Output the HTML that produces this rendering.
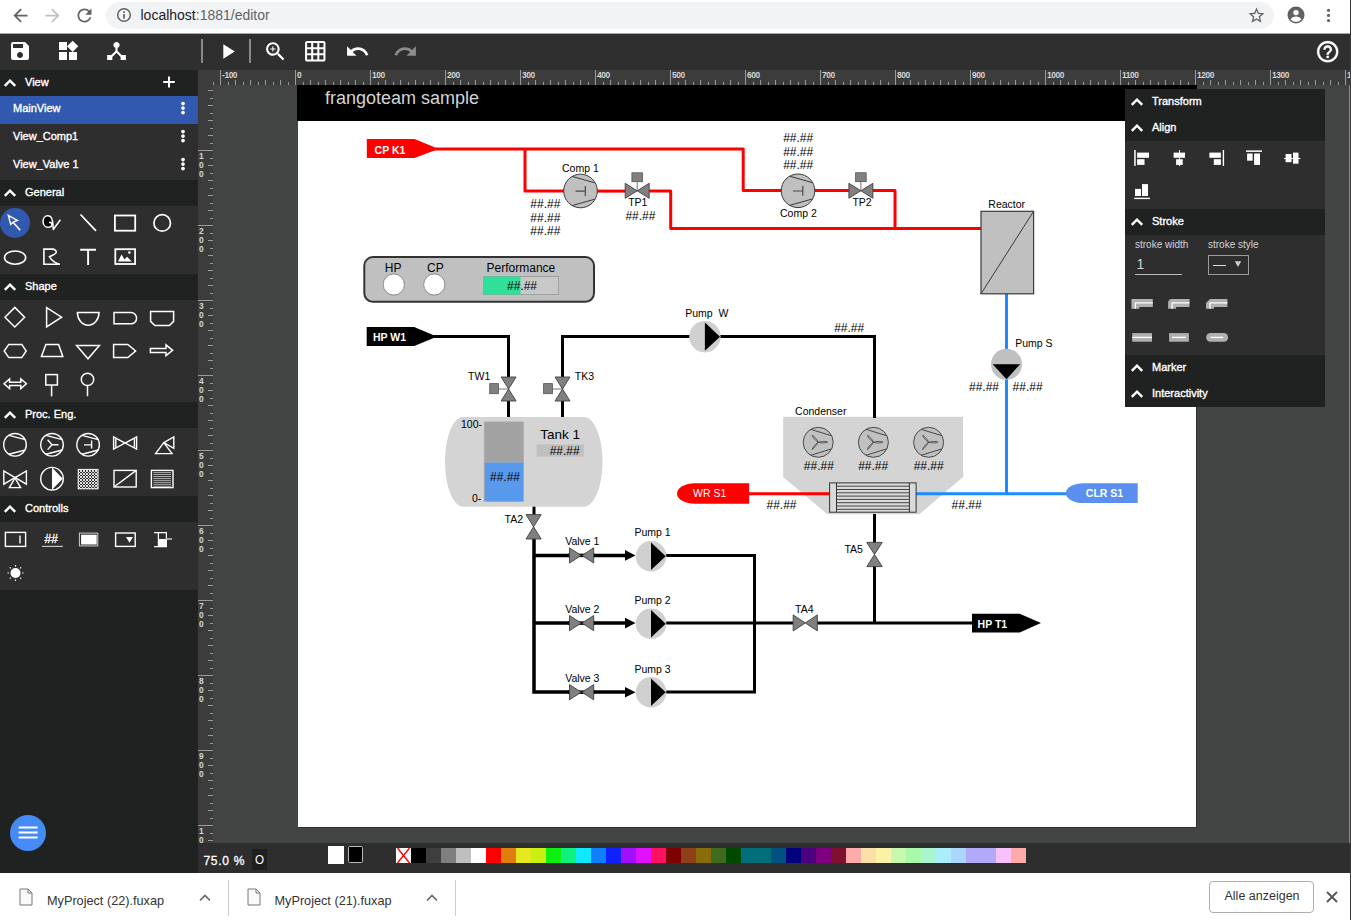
<!DOCTYPE html>
<html><head><meta charset="utf-8"><style>
html,body{margin:0;padding:0;width:1351px;height:920px;overflow:hidden;background:#fff;font-family:"Liberation Sans",sans-serif;}
.a{position:absolute;}
.t{position:absolute;white-space:nowrap;line-height:1;}
.ui{-webkit-text-stroke:0.35px #fff;}
</style></head><body>

<div class="a" style="left:0;top:0;width:1351px;height:33px;background:#fff"></div>
<div class="a" style="left:0;top:33px;width:1351px;height:1px;background:#a9a9a9"></div>
<div class="a" style="left:106px;top:1.5px;width:1168px;height:27.5px;border-radius:14px;background:#f1f3f4"></div>
<svg class="a" style="left:9.5px;top:4.5px" width="21" height="21" viewBox="0 0 24 24"><path fill="#5f6368" d="M20 11H7.83l5.59-5.59L12 4l-8 8 8 8 1.41-1.41L7.83 13H20v-2z"/></svg>
<svg class="a" style="left:41.5px;top:4.5px" width="21" height="21" viewBox="0 0 24 24"><path fill="#bdc1c6" d="M12 4l-1.41 1.41L16.17 11H4v2h12.17l-5.58 5.59L12 20l8-8z"/></svg>
<svg class="a" style="left:73.5px;top:4.5px" width="21" height="21" viewBox="0 0 24 24"><path fill="#5f6368" d="M17.65 6.35C16.2 4.9 14.21 4 12 4c-4.42 0-7.99 3.58-7.99 8s3.57 8 7.99 8c3.73 0 6.84-2.55 7.73-6h-2.08c-.82 2.33-3.04 4-5.65 4-3.31 0-6-2.69-6-6s2.69-6 6-6c1.66 0 3.14.69 4.22 1.78L13 11h7V4l-2.35 2.35z"/></svg>
<svg class="a" style="left:116px;top:7px" width="16" height="16" viewBox="0 0 16 16"><circle cx="8" cy="8" r="6.3" fill="none" stroke="#5f6368" stroke-width="1.5"/><rect x="7.2" y="7" width="1.7" height="4.6" fill="#5f6368"/><rect x="7.2" y="4.3" width="1.7" height="1.7" fill="#5f6368"/></svg>
<div class="t" style="left:140.5px;top:8px;font-size:14px;color:#202124">localhost<span style="color:#5f6368">:1881/editor</span></div>
<svg class="a" style="left:1246.6px;top:5.6px" width="19" height="19" viewBox="0 0 24 24"><path fill="#5f6368" d="M22 9.24l-7.19-.62L12 2 9.19 8.63 2 9.24l5.46 4.73L5.82 21 12 17.27 18.18 21l-1.63-7.03L22 9.24zM12 15.4l-3.76 2.27 1-4.28-3.32-2.88 4.38-.38L12 6.1l1.71 4.04 4.38.38-3.32 2.88 1 4.28L12 15.4z"/></svg>
<svg class="a" style="left:1286px;top:5px" width="20" height="20" viewBox="0 0 20 20"><circle cx="10" cy="10" r="8.5" fill="#5f6368"/><circle cx="10" cy="7.6" r="2.7" fill="#fff"/><path d="M4.6 14.2c1.1-1.8 3.2-2.6 5.4-2.6s4.3.8 5.4 2.6c-1.3 1.6-3.2 2.6-5.4 2.6s-4.1-1-5.4-2.6z" fill="#fff"/></svg>
<svg class="a" style="left:1324px;top:7px" width="9" height="17" viewBox="0 0 9 17"><circle cx="4.5" cy="3.3" r="1.6" fill="#5f6368"/><circle cx="4.5" cy="8.4" r="1.6" fill="#5f6368"/><circle cx="4.5" cy="13.6" r="1.6" fill="#5f6368"/></svg>

<div class="a" style="left:0;top:34px;width:1351px;height:36px;background:#2f2f2f"></div>
<svg class="a" style="left:8px;top:39px" width="24" height="24" viewBox="0 0 24 24"><path fill="#fff" d="M17 3H5c-1.11 0-2 .9-2 2v14c0 1.1.89 2 2 2h14c1.1 0 2-.9 2-2V7l-4-4zm-5 16c-1.66 0-3-1.34-3-3s1.34-3 3-3 3 1.34 3 3-1.34 3-3 3zm3-10H5V5h10v4z"/></svg>
<svg class="a" style="left:55.5px;top:39px" width="24" height="24" viewBox="0 0 24 24"><path fill="#fff" d="M13 13v8h8v-8h-8zM3 21h8v-8H3v8zM3 3v8h8V3H3zm13.66-1.31L11 7.34 16.66 13l5.66-5.66-5.66-5.65z"/></svg>
<svg class="a" style="left:103.6px;top:38.8px" width="25" height="24" viewBox="0 0 24 24" preserveAspectRatio="none"><path fill="#fff" d="M17 16l-4-4V8.82C14.16 8.4 15 7.3 15 6c0-1.66-1.34-3-3-3S9 4.34 9 6c0 1.3.84 2.4 2 2.82V12l-4 4H3v5h5v-3.05l4-4.2 4 4.2V21h5v-5h-4z"/></svg>
<div class="a" style="left:201px;top:39px;width:2px;height:24px;background:#8a8a8a"></div>
<svg class="a" style="left:214.5px;top:38.5px" width="25" height="25" viewBox="0 0 24 24"><path fill="#fff" d="M8 5v14l11-7z"/></svg>
<div class="a" style="left:249px;top:39px;width:2px;height:24px;background:#8a8a8a"></div>
<svg class="a" style="left:262.5px;top:38.8px" width="25" height="25" viewBox="0 0 24 24"><path fill="#fff" d="M15.5 14h-.79l-.28-.27C15.41 12.59 16 11.11 16 9.5 16 5.91 13.09 3 9.5 3S3 5.91 3 9.5 5.91 16 9.5 16c1.61 0 3.09-.59 4.23-1.57l.27.28v.79l5 4.99L20.49 19l-4.99-5zm-6 0C7.01 14 5 11.99 5 9.5S7.01 5 9.5 5 14 7.01 14 9.5 11.99 14 9.5 14zm2.5-4h-2v2H9v-2H7V9h2V7h1v2h2v1z"/></svg>
<svg class="a" style="left:303.3px;top:39px" width="24.5" height="24.5" viewBox="0 0 24 24"><path fill="#fff" d="M20 2H4c-1.1 0-2 .9-2 2v16c0 1.1.9 2 2 2h16c1.1 0 2-.9 2-2V4c0-1.1-.9-2-2-2zM8 20H4v-4h4v4zm0-6H4v-4h4v4zm0-6H4V4h4v4zm6 12h-4v-4h4v4zm0-6h-4v-4h4v4zm0-6h-4V4h4v4zm6 12h-4v-4h4v4zm0-6h-4v-4h4v4zm0-6h-4V4h4v4z"/></svg>
<svg class="a" style="left:344.5px;top:38.5px" width="25" height="25" viewBox="0 0 24 24"><path fill="#fff" d="M12.5 8c-2.65 0-5.05.99-6.9 2.6L2 7v9h9l-3.62-3.62c1.39-1.16 3.16-1.88 5.12-1.88 3.54 0 6.55 2.31 7.6 5.5l2.37-.78C21.08 11.03 17.15 8 12.5 8z"/></svg>
<svg class="a" style="left:392.5px;top:38.5px" width="25" height="25" viewBox="0 0 24 24"><path fill="#8c8c8c" d="M18.4 10.6C16.55 8.99 14.15 8 11.5 8c-4.65 0-8.58 3.03-9.96 7.22L3.9 16c1.05-3.19 4.05-5.5 7.6-5.5 1.95 0 3.73.72 5.12 1.88L13 16h9V7l-3.6 3.6z"/></svg>
<svg class="a" style="left:1315.2px;top:38.6px" width="25.4" height="25.4" viewBox="0 0 24 24"><path fill="#fff" stroke="#fff" stroke-width="0.3" d="M11 18h2v-2h-2v2zm1-16C6.48 2 2 6.48 2 12s4.48 10 10 10 10-4.48 10-10S17.52 2 12 2zm0 18c-4.41 0-8-3.59-8-8s3.59-8 8-8 8 3.59 8 8-3.59 8-8 8zm0-14c-2.21 0-4 1.79-4 4h2c0-1.1.9-2 2-2s2 .9 2 2c0 2-3 1.75-3 5h2c0-2.25 3-2.5 3-5 0-2.21-1.79-4-4-4z"/></svg>

<div class="a" style="left:0;top:70px;width:198px;height:803px;background:#202221"></div>
<div class="a" style="left:0px;top:70px;width:198px;height:26px;background:#202221"></div><svg class="a" style="left:3px;top:78px" width="14" height="10" viewBox="0 0 14 10"><path d="M1.8 7.8L7 2.6 12.2 7.8" fill="none" stroke="#fff" stroke-width="2.4"/></svg><div class="t ui" style="left:25px;top:76.5px;font-size:11px;color:#fff">View</div>
<svg class="a" style="left:162px;top:76px" width="14" height="12"><path d="M7 0.5V11.5M1.2 6H12.8" stroke="#fff" stroke-width="2"/></svg>
<div class="a" style="left:0;top:96px;width:198px;height:28px;background:#3059af"></div>
<div class="a" style="left:0;top:124px;width:198px;height:56px;background:#2e2e2e"></div>
<div class="t ui" style="left:13px;top:103px;font-size:11px;color:#fff">MainView</div>
<svg class="a" style="left:181px;top:101px" width="4" height="18"><circle cx="2" cy="2.6" r="1.85" fill="#fff"/><circle cx="2" cy="7.1" r="1.85" fill="#fff"/><circle cx="2" cy="11.6" r="1.85" fill="#fff"/></svg>
<div class="t ui" style="left:13px;top:131px;font-size:11px;color:#fff">View_Comp1</div>
<svg class="a" style="left:181px;top:129px" width="4" height="18"><circle cx="2" cy="2.6" r="1.85" fill="#fff"/><circle cx="2" cy="7.1" r="1.85" fill="#fff"/><circle cx="2" cy="11.6" r="1.85" fill="#fff"/></svg>
<div class="t ui" style="left:13px;top:159px;font-size:11px;color:#fff">View_Valve 1</div>
<svg class="a" style="left:181px;top:157px" width="4" height="18"><circle cx="2" cy="2.6" r="1.85" fill="#fff"/><circle cx="2" cy="7.1" r="1.85" fill="#fff"/><circle cx="2" cy="11.6" r="1.85" fill="#fff"/></svg>
<div class="a" style="left:0px;top:180px;width:198px;height:26px;background:#202221"></div><svg class="a" style="left:3px;top:188px" width="14" height="10" viewBox="0 0 14 10"><path d="M1.8 7.8L7 2.6 12.2 7.8" fill="none" stroke="#fff" stroke-width="2.4"/></svg><div class="t ui" style="left:25px;top:186.5px;font-size:11px;color:#fff">General</div>
<div class="a" style="left:0;top:206px;width:198px;height:68px;background:#2e2e2e"></div>
<div class="a" style="left:0px;top:274px;width:198px;height:26px;background:#202221"></div><svg class="a" style="left:3px;top:282px" width="14" height="10" viewBox="0 0 14 10"><path d="M1.8 7.8L7 2.6 12.2 7.8" fill="none" stroke="#fff" stroke-width="2.4"/></svg><div class="t ui" style="left:25px;top:280.5px;font-size:11px;color:#fff">Shape</div>
<div class="a" style="left:0;top:300px;width:198px;height:102px;background:#2e2e2e"></div>
<div class="a" style="left:0px;top:402px;width:198px;height:26px;background:#202221"></div><svg class="a" style="left:3px;top:410px" width="14" height="10" viewBox="0 0 14 10"><path d="M1.8 7.8L7 2.6 12.2 7.8" fill="none" stroke="#fff" stroke-width="2.4"/></svg><div class="t ui" style="left:25px;top:408.5px;font-size:11px;color:#fff">Proc. Eng.</div>
<div class="a" style="left:0;top:428px;width:198px;height:68px;background:#2e2e2e"></div>
<div class="a" style="left:0px;top:496px;width:198px;height:26px;background:#202221"></div><svg class="a" style="left:3px;top:504px" width="14" height="10" viewBox="0 0 14 10"><path d="M1.8 7.8L7 2.6 12.2 7.8" fill="none" stroke="#fff" stroke-width="2.4"/></svg><div class="t ui" style="left:25px;top:502.5px;font-size:11px;color:#fff">Controlls</div>
<div class="a" style="left:0;top:522px;width:198px;height:68px;background:#2e2e2e"></div>
<svg class="a" style="left:10px;top:814.5px" width="36" height="36"><circle cx="18" cy="18" r="18" fill="#468af6"/><path d="M8.6 12.5h19M8.6 17.5h19M8.6 22.5h19" stroke="#fff" stroke-width="1.8"/></svg>
<svg class="a" style="left:0;top:0" width="200" height="600" font-family='"Liberation Sans", sans-serif'>
<defs><pattern id="chk" width="3" height="3" patternUnits="userSpaceOnUse"><rect width="3" height="3" fill="#2e2e2e"/><path d="M0 0L3 3M3 0L0 3" stroke="#f0f0f0" stroke-width="0.9"/></pattern></defs>
<circle cx="15" cy="223" r="15" fill="#3059af"/>
<path d="M8.3 215.4L10.7 224.4L13.1 222.1L17.4 220.4Z" fill="none" stroke="#fff" stroke-width="1.4" stroke-linejoin="miter"/>
<path d="M13.1 222.2L20.2 230.2" fill="none" stroke="#fff" stroke-width="1.6"/>
<path d="M52.2 219.6C51.4 217 49.6 215.7 47.7 215.7C45 215.7 43.1 218.3 43.1 221.5C43.1 224.8 45.2 227.3 47.9 227.3C50.2 227.3 51.9 225.9 51.9 224.2C51.9 222.9 50.6 222.2 49 222.6" fill="#000" stroke="#fff" stroke-width="1.5"/>
<path d="M52.2 219.6C52.9 222.5 53.2 226 53.3 229.5L60.4 219.8" fill="none" stroke="#fff" stroke-width="1.5" stroke-linejoin="round"/>
<path d="M80.5 214.5L96 230.8" fill="none" stroke="#fff" stroke-width="1.8"/>
<rect x="114.9" y="215.5" width="20.3" height="15.2" fill="none" stroke="#fff" stroke-width="1.8"/>
<circle cx="162.2" cy="222.9" r="8.3" fill="none" stroke="#fff" stroke-width="1.7"/>
<ellipse cx="15.1" cy="257.6" rx="10.6" ry="6.6" fill="none" stroke="#fff" stroke-width="1.6"/>
<path d="M43.9 264.3V249.1H53.2C55.6 249.6 56.8 251.5 55.8 253.1C54.6 254.8 51.5 255.4 49.4 256.7C51 259.5 54 263 59.8 264.3Z" fill="none" stroke="#fff" stroke-width="1.6"/>
<path d="M80.2 249.8H96M88.1 249.8V265" fill="none" stroke="#fff" stroke-width="1.9"/>
<rect x="115.3" y="249.2" width="19.8" height="14.8" fill="none" stroke="#fff" stroke-width="1.8"/>
<path d="M118 261.6L121.5 254.6L124.6 259.6L127 256.8L131.8 261.6Z" fill="#fff"/><circle cx="129.4" cy="252.5" r="1.3" fill="#fff"/>
<path d="M14.8 307.4L24.6 317.2L14.8 327L5 317.2Z" fill="none" stroke="#fff" stroke-width="1.5" stroke-linejoin="miter"/>
<path d="M46.6 307.6V326.8L61.6 317.2Z" fill="none" stroke="#fff" stroke-width="1.5" stroke-linejoin="miter"/>
<path d="M77.4 312.4H99A10.8 12.8 0 0 1 77.4 312.4Z" fill="none" stroke="#fff" stroke-width="1.5" stroke-linejoin="miter"/>
<path d="M114 312.6H131A5.6 5.6 0 0 1 131 323.8H114Z" fill="none" stroke="#fff" stroke-width="1.5" stroke-linejoin="miter"/>
<path d="M150.6 311.6H173.6V321.4L169.4 325.6H154.8L150.6 321.4Z" fill="none" stroke="#fff" stroke-width="1.5" stroke-linejoin="miter"/>
<path d="M4.2 351L8.8 344.4H21.8L26.2 351L21.8 357.6H8.8Z" fill="none" stroke="#fff" stroke-width="1.5" stroke-linejoin="miter"/>
<path d="M41.4 356.6L45.9 344.5H58.6L62.8 356.6Z" fill="none" stroke="#fff" stroke-width="1.5" stroke-linejoin="miter"/>
<path d="M76.6 345.4H99.4L88 358.8Z" fill="none" stroke="#fff" stroke-width="1.5" stroke-linejoin="miter"/>
<path d="M113.6 344.5H127.8L135.6 351L127.8 357.6H113.6Z" fill="none" stroke="#fff" stroke-width="1.5" stroke-linejoin="miter"/>
<path d="M150.4 348.6H166V344.8L172.6 350.3L166 355.6V352.4H150.4Z" fill="none" stroke="#fff" stroke-width="1.5" stroke-linejoin="miter" stroke-width="1.3"/>
<path d="M4 383.8L9.6 379V382.2H20.8V379L26.4 383.8L20.8 388.6V385.4H9.6V388.6Z" fill="none" stroke="#fff" stroke-width="1.5" stroke-linejoin="miter" stroke-width="1.3"/>
<rect x="45.8" y="374.6" width="11.6" height="10.4" fill="none" stroke="#fff" stroke-width="1.5" stroke-linejoin="miter"/>
<path d="M51.6 385V396.4" fill="none" stroke="#fff" stroke-width="1.5" stroke-linejoin="miter"/>
<circle cx="87.5" cy="379.4" r="6.2" fill="none" stroke="#fff" stroke-width="1.5" stroke-linejoin="miter"/>
<path d="M87.5 385.6V396.2" fill="none" stroke="#fff" stroke-width="1.5" stroke-linejoin="miter"/>
<circle cx="15" cy="444.8" r="11.3" fill="none" stroke="#fff" stroke-width="1.4"/>
<path d="M9 435.40000000000003L25.2 439.6M9 454.2L25.2 450.0" fill="none" stroke="#fff" stroke-width="1.4" stroke-width="1.1"/>
<circle cx="52" cy="444.8" r="11.3" fill="none" stroke="#fff" stroke-width="1.4"/>
<path d="M46 435.40000000000003L62.2 439.6M46 454.2L62.2 450.0" fill="none" stroke="#fff" stroke-width="1.4" stroke-width="1.1"/>
<path d="M52 444.8H58.5M52 444.8L47.6 439.8M52 444.8L47.6 449.6" fill="none" stroke="#fff" stroke-width="1.4" stroke-width="2.2"/>
<circle cx="88.1" cy="444.8" r="11.3" fill="none" stroke="#fff" stroke-width="1.4"/>
<path d="M82.1 435.40000000000003L98.3 439.6M82.1 454.2L98.3 450.0" fill="none" stroke="#fff" stroke-width="1.4" stroke-width="1.1"/>
<path d="M84 444.9H91.6M91.6 440.6V448.6" fill="none" stroke="#fff" stroke-width="1.4" stroke-width="1.3"/>
<path d="M113.6 437V449.2L125 443.1ZM136.6 437V449.2L125.2 443.1Z" fill="none" stroke="#fff" stroke-width="1.4" stroke-width="1.3"/>
<path d="M115.8 438.4V447.8M134.4 438.4V447.8" fill="none" stroke="#fff" stroke-width="1.4" stroke-width="0.8"/>
<path d="M155.6 453.6H172L163.8 442.6ZM163.8 442.6L173.8 437V448.4Z" fill="none" stroke="#fff" stroke-width="1.4" stroke-width="1.3"/>
<path d="M3.8 471V484.2L15 477.6ZM26.4 471V484.2L15.2 477.6Z" fill="none" stroke="#fff" stroke-width="1.4" stroke-width="1.3"/>
<path d="M9.4 487.6H20.6L15 478Z" fill="none" stroke="#fff" stroke-width="1.4" stroke-width="1.3"/>
<circle cx="52" cy="478.7" r="11.3" fill="none" stroke="#fff" stroke-width="1.4"/>
<path d="M52 467.6V489.8L62.8 478.7Z" fill="#fff"/>
<rect x="78.2" y="469.4" width="19.8" height="19.4" fill="url(#chk)" stroke="#fff" stroke-width="1"/>
<rect x="114" y="470.4" width="22.2" height="16.6" fill="none" stroke="#fff" stroke-width="1.4"/>
<path d="M114 487L136.2 470.4" fill="none" stroke="#fff" stroke-width="1.4" stroke-width="1.2"/>
<rect x="151.4" y="470.4" width="21.6" height="17.2" fill="none" stroke="#fff" stroke-width="1.4" stroke-width="1.2"/>
<path d="M153.4 472.60H171M153.4 474.55H171M153.4 476.50H171M153.4 478.45H171M153.4 480.40H171M153.4 482.35H171M153.4 484.30H171M153.4 486.25H171" stroke="#cfcfcf" stroke-width="0.8"/>
<rect x="5.4" y="532.4" width="20.2" height="14" fill="none" stroke="#fff" stroke-width="1.4" stroke-width="1.3"/>
<path d="M20 535.6V543.4" fill="none" stroke="#fff" stroke-width="1.4" stroke-width="1.3"/>
<text x="44.6" y="543" font-size="12" fill="#fff" stroke="#fff" stroke-width="0.3">##</text>
<path d="M42 546.4H62.8" stroke="#c4c4c4" stroke-width="1.2"/>
<rect x="79.4" y="533.1" width="18.4" height="12.8" fill="none" stroke="#cfcfcf" stroke-width="1"/>
<rect x="81.1" y="534.7" width="15.6" height="9.8" fill="#fff"/>
<rect x="115.6" y="533" width="19.6" height="13.4" fill="none" stroke="#fff" stroke-width="1.4" stroke-width="1.4"/>
<path d="M126 537H133L129.5 542.8Z" fill="#fff"/>
<path d="M154.1 532.6H167M154.1 546.6H167M158.4 532.6V546.6M166.4 532.6V546.6" stroke="#fff" stroke-width="1.2" fill="none"/>
<rect x="158.4" y="539" width="8" height="7.6" fill="#fff"/>
<path d="M166.4 539H172" stroke="#b0b0b0" stroke-width="1.8"/>
<circle cx="15.5" cy="573" r="5" fill="#fff"/>
<path d="M22.10 573.00L23.50 573.00M20.17 577.67L21.16 578.66M15.50 579.60L15.50 581.00M10.83 577.67L9.84 578.66M8.90 573.00L7.50 573.00M10.83 568.33L9.84 567.34M15.50 566.40L15.50 565.00M20.17 568.33L21.16 567.34" stroke="#fff" stroke-width="1.2"/>
</svg>
<div class="a" style="left:213px;top:85px;width:1138px;height:758px;background:#434544"></div>
<div class="a" style="left:297px;top:85px;width:900px;height:36px;background:#000"></div>
<div class="a" style="left:297.8px;top:121px;width:898.7px;height:705.5px;background:#fff;box-shadow:0.6px 0.6px 0 #222"></div>
<div class="t" style="left:325px;top:89px;font-size:18px;color:#d4d4d4">frangoteam sample</div>
<svg style="position:absolute;left:0;top:0" width="1351" height="920">
<rect x="198" y="70" width="1153" height="15" fill="#3c3c3c"/>
<rect x="198" y="85" width="15" height="758" fill="#3c3c3c"/>
<path d="M213.5 82V85M220.5 70V85M228.5 82V85M235.5 80V85M243.5 82V85M250.5 80V85M258.5 82V85M265.5 80V85M273.5 82V85M280.5 80V85M288.5 82V85M295.5 70V85M303.5 82V85M310.5 80V85M318.5 82V85M325.5 80V85M333.5 82V85M340.5 80V85M348.5 82V85M355.5 80V85M363.5 82V85M370.5 70V85M378.5 82V85M385.5 80V85M393.5 82V85M400.5 80V85M408.5 82V85M415.5 80V85M423.5 82V85M430.5 80V85M438.5 82V85M445.5 70V85M453.5 82V85M460.5 80V85M468.5 82V85M475.5 80V85M483.5 82V85M490.5 80V85M498.5 82V85M505.5 80V85M513.5 82V85M520.5 70V85M528.5 82V85M535.5 80V85M543.5 82V85M550.5 80V85M558.5 82V85M565.5 80V85M573.5 82V85M580.5 80V85M588.5 82V85M595.5 70V85M603.5 82V85M610.5 80V85M618.5 82V85M625.5 80V85M633.5 82V85M640.5 80V85M648.5 82V85M655.5 80V85M663.5 82V85M670.5 70V85M678.5 82V85M685.5 80V85M693.5 82V85M700.5 80V85M708.5 82V85M715.5 80V85M723.5 82V85M730.5 80V85M738.5 82V85M745.5 70V85M753.5 82V85M760.5 80V85M768.5 82V85M775.5 80V85M783.5 82V85M790.5 80V85M798.5 82V85M805.5 80V85M813.5 82V85M820.5 70V85M828.5 82V85M835.5 80V85M843.5 82V85M850.5 80V85M858.5 82V85M865.5 80V85M873.5 82V85M880.5 80V85M888.5 82V85M895.5 70V85M903.5 82V85M910.5 80V85M918.5 82V85M925.5 80V85M933.5 82V85M940.5 80V85M948.5 82V85M955.5 80V85M963.5 82V85M970.5 70V85M978.5 82V85M985.5 80V85M993.5 82V85M1000.5 80V85M1008.5 82V85M1015.5 80V85M1023.5 82V85M1030.5 80V85M1038.5 82V85M1045.5 70V85M1053.5 82V85M1060.5 80V85M1068.5 82V85M1075.5 80V85M1083.5 82V85M1090.5 80V85M1098.5 82V85M1105.5 80V85M1113.5 82V85M1120.5 70V85M1128.5 82V85M1135.5 80V85M1143.5 82V85M1150.5 80V85M1158.5 82V85M1165.5 80V85M1173.5 82V85M1180.5 80V85M1188.5 82V85M1195.5 70V85M1203.5 82V85M1210.5 80V85M1218.5 82V85M1225.5 80V85M1233.5 82V85M1240.5 80V85M1248.5 82V85M1255.5 80V85M1263.5 82V85M1270.5 70V85M1278.5 82V85M1285.5 80V85M1293.5 82V85M1300.5 80V85M1308.5 82V85M1315.5 80V85M1323.5 82V85M1330.5 80V85M1338.5 82V85M1345.5 70V85M208 90.5H213M210 98.5H213M208 105.5H213M210 113.5H213M208 120.5H213M210 128.5H213M208 135.5H213M210 143.5H213M198 150.5H213M210 158.5H213M208 165.5H213M210 173.5H213M208 180.5H213M210 188.5H213M208 195.5H213M210 203.5H213M208 210.5H213M210 218.5H213M198 225.5H213M210 233.5H213M208 240.5H213M210 248.5H213M208 255.5H213M210 263.5H213M208 270.5H213M210 278.5H213M208 285.5H213M210 293.5H213M198 300.5H213M210 308.5H213M208 315.5H213M210 323.5H213M208 330.5H213M210 338.5H213M208 345.5H213M210 353.5H213M208 360.5H213M210 368.5H213M198 375.5H213M210 383.5H213M208 390.5H213M210 398.5H213M208 405.5H213M210 413.5H213M208 420.5H213M210 428.5H213M208 435.5H213M210 443.5H213M198 450.5H213M210 458.5H213M208 465.5H213M210 473.5H213M208 480.5H213M210 488.5H213M208 495.5H213M210 503.5H213M208 510.5H213M210 518.5H213M198 525.5H213M210 533.5H213M208 540.5H213M210 548.5H213M208 555.5H213M210 563.5H213M208 570.5H213M210 578.5H213M208 585.5H213M210 593.5H213M198 600.5H213M210 608.5H213M208 615.5H213M210 623.5H213M208 630.5H213M210 638.5H213M208 645.5H213M210 653.5H213M208 660.5H213M210 668.5H213M198 675.5H213M210 683.5H213M208 690.5H213M210 698.5H213M208 705.5H213M210 713.5H213M208 720.5H213M210 728.5H213M208 735.5H213M210 743.5H213M198 750.5H213M210 758.5H213M208 765.5H213M210 773.5H213M208 780.5H213M210 788.5H213M208 795.5H213M210 803.5H213M208 810.5H213M210 818.5H213M198 825.5H213M210 833.5H213M208 840.5H213" stroke="#9a9a9a" stroke-width="1" fill="none"/>
<g font-family='"Liberation Sans", sans-serif' font-size="8.4" font-weight="bold" letter-spacing="-0.45" fill="#d4d4d4"><text x="222.1" y="78.1">-100</text><text x="297.1" y="78.1">0</text><text x="372.1" y="78.1">100</text><text x="447.1" y="78.1">200</text><text x="522.1" y="78.1">300</text><text x="597.1" y="78.1">400</text><text x="672.1" y="78.1">500</text><text x="747.1" y="78.1">600</text><text x="822.1" y="78.1">700</text><text x="897.1" y="78.1">800</text><text x="972.1" y="78.1">900</text><text x="1047.1" y="78.1">1000</text><text x="1122.1" y="78.1">1100</text><text x="1197.1" y="78.1">1200</text><text x="1272.1" y="78.1">1300</text><text x="1347.1" y="78.1">1400</text></g>
<g font-family='"Liberation Sans", sans-serif' font-size="8.4" font-weight="bold" fill="#d4d4d4"><text x="199" y="159.1">1</text><text x="199" y="168.1">0</text><text x="199" y="177.1">0</text><text x="199" y="234.1">2</text><text x="199" y="243.1">0</text><text x="199" y="252.1">0</text><text x="199" y="309.1">3</text><text x="199" y="318.1">0</text><text x="199" y="327.1">0</text><text x="199" y="384.1">4</text><text x="199" y="393.1">0</text><text x="199" y="402.1">0</text><text x="199" y="459.1">5</text><text x="199" y="468.1">0</text><text x="199" y="477.1">0</text><text x="199" y="534.1">6</text><text x="199" y="543.1">0</text><text x="199" y="552.1">0</text><text x="199" y="609.1">7</text><text x="199" y="618.1">0</text><text x="199" y="627.1">0</text><text x="199" y="684.1">8</text><text x="199" y="693.1">0</text><text x="199" y="702.1">0</text><text x="199" y="759.1">9</text><text x="199" y="768.1">0</text><text x="199" y="777.1">0</text><text x="199" y="834.1">1</text><text x="199" y="843.1">0</text><text x="199" y="852.1">0</text><text x="199" y="861.1">0</text></g>
</svg>
<div class="a" style="left:1349px;top:85px;width:1px;height:758px;background:#8a8a8a"></div>
<svg class="a" style="left:0;top:0" width="1351" height="920" font-family='"Liberation Sans", sans-serif'>
<path d="M783.2 416.8H963.1V477L919.2 514.3H827.5L783.2 477Z" fill="#d4d4d4"/>
<g fill="none" stroke="#ff0000" stroke-width="3" stroke-linejoin="round" stroke-linecap="butt">
<path d="M430 149H743.2V190.6H782"/>
<path d="M525 149V191.1H564"/>
<path d="M597 191.1H626"/>
<path d="M648 191.1H670.7V228.4H982"/>
<path d="M814 190.6H850"/>
<path d="M872 190.6H895V228.4"/>
<path d="M749 493.8H830"/>
</g>
<g fill="none" stroke="#1a8cff" stroke-width="3">
<path d="M1006.5 294V350"/>
<path d="M1006.5 378V493.8"/>
<path d="M916 493.8H1068"/>
</g>
<g fill="none" stroke="#000" stroke-width="3">
<path d="M430 336.5H508.5V378"/>
<path d="M508.5 400V418"/>
<path d="M562.5 418V400"/>
<path d="M562.5 378V336.5H690"/>
<path d="M720 336.5H874.5V418"/>
<path d="M534 506V515"/>
<path d="M874.5 514V543"/><path d="M874.5 566V623"/>
<path d="M665 555.5H754.5V692H666"/>
<path d="M665 623H793"/><path d="M817 623H975"/>
</g>
<g fill="none" stroke="#000" stroke-width="3.5">
<path d="M534 538V692H570"/>
<path d="M534 555.5H570"/><path d="M593 555.5H627"/>
<path d="M534 623H570"/><path d="M593 623H627"/>
<path d="M593 692H627"/>
</g>
<path d="M366.8 139H414.5L434.6 147.2V150.4L414.5 158H366.8Z" fill="#ff0000"/>
<text x="374.6" y="154.2" font-size="10.5" fill="#fff" font-weight="bold" text-anchor="start" >CP K1</text>
<path d="M366.7 327.1H414.2L433.7 335.3V337.9L414.2 346.1H366.7Z" fill="#000"/>
<text x="373" y="341" font-size="10.5" fill="#fff" font-weight="bold" text-anchor="start" >HP W1</text>
<path d="M972 613.7H1019.7L1041 623.1L1019.7 632.5H972Z" fill="#000"/>
<text x="977.6" y="627.8" font-size="10.5" fill="#fff" font-weight="bold" text-anchor="start" >HP T1</text>
<path d="M749.1 483.3H695A18 10.25 0 0 0 695 503.8H749.1Z" fill="#ff0000"/>
<text x="693" y="497" font-size="10.5" fill="#fff" font-weight="normal" text-anchor="start" >WR S1</text>
<path d="M1137.7 483.2H1083.5A17.6 9.95 0 0 0 1083.5 503.1H1137.7Z" fill="#5a8ff0"/>
<text x="1085.8" y="497.2" font-size="10.5" fill="#fff" font-weight="bold" text-anchor="start" >CLR S1</text>
<g transform="translate(580.5 191)">
<circle r="16.8" fill="#c0c0c0" stroke="#3a3a3a" stroke-width="1"/>
<path d="M-8.4 -14.6L14.2 -8.2M-8.4 14.6L14.2 8.2" stroke="#3a3a3a" stroke-width="1" fill="none"/>
<path d="M-5 0.2H4.8M4.8 -5V5" stroke="#4a4a4a" stroke-width="1.2" fill="none"/>
</g>
<g transform="translate(798 190.8)">
<circle r="16.8" fill="#c0c0c0" stroke="#3a3a3a" stroke-width="1"/>
<path d="M-8.4 -14.6L14.2 -8.2M-8.4 14.6L14.2 8.2" stroke="#3a3a3a" stroke-width="1" fill="none"/>
<path d="M-5 0.2H4.8M4.8 -5V5" stroke="#4a4a4a" stroke-width="1.2" fill="none"/>
</g>
<text x="562" y="171.8" font-size="10.5" fill="#000" font-weight="normal" text-anchor="start" >Comp 1</text>
<text x="780" y="217" font-size="10.5" fill="#000" font-weight="normal" text-anchor="start" >Comp 2</text>
<text x="530.3" y="208.1" font-size="12" fill="#000" font-weight="normal" text-anchor="start" >##.##</text>
<text x="530.3" y="221.5" font-size="12" fill="#000" font-weight="normal" text-anchor="start" >##.##</text>
<text x="530.3" y="234.9" font-size="12" fill="#000" font-weight="normal" text-anchor="start" >##.##</text>
<text x="625.4" y="220.3" font-size="12" fill="#000" font-weight="normal" text-anchor="start" >##.##</text>
<text x="783.2" y="142.4" font-size="12" fill="#000" font-weight="normal" text-anchor="start" >##.##</text>
<text x="783.2" y="155.7" font-size="12" fill="#000" font-weight="normal" text-anchor="start" >##.##</text>
<text x="783.2" y="169.0" font-size="12" fill="#000" font-weight="normal" text-anchor="start" >##.##</text>
<g transform="translate(637.2 190.8)">
<path d="M0 -9.5V0" stroke="#777" stroke-width="1"/>
<rect x="-5.3" y="-18" width="10.6" height="8.9" fill="#808080" stroke="#555" stroke-width="0.8"/>
<path d="M-12.0 -7.5V7.5L0 0ZM12.0 -7.5V7.5L0 0Z" fill="#808080" stroke="#404040" stroke-width="0.9" stroke-linejoin="round"/>
</g>
<g transform="translate(860.9 190.75)">
<path d="M0 -9.5V0" stroke="#777" stroke-width="1"/>
<rect x="-5.3" y="-18" width="10.6" height="8.9" fill="#808080" stroke="#555" stroke-width="0.8"/>
<path d="M-12.0 -7.5V7.5L0 0ZM12.0 -7.5V7.5L0 0Z" fill="#808080" stroke="#404040" stroke-width="0.9" stroke-linejoin="round"/>
</g>
<text x="628.2" y="205.7" font-size="10.5" fill="#000" font-weight="normal" text-anchor="start" >TP1</text>
<text x="852.4" y="205.6" font-size="10.5" fill="#000" font-weight="normal" text-anchor="start" >TP2</text>
<rect x="981" y="211.3" width="52.6" height="82.5" fill="#c0c0c0" stroke="#3a3a3a" stroke-width="1.2"/>
<path d="M981 293.8L1033.6 211.3" stroke="#3a3a3a" stroke-width="1"/>
<text x="988.3" y="208" font-size="10.5" fill="#000" font-weight="normal" text-anchor="start" >Reactor</text>
<circle cx="1006.5" cy="364.3" r="15.5" fill="#c0c0c0"/>
<path d="M992.7 364.2H1020.2L1006.5 379.2Z" fill="#000"/>
<text x="1015.2" y="346.8" font-size="10.5" fill="#000" font-weight="normal" text-anchor="start" >Pump S</text>
<text x="969" y="390.8" font-size="12" fill="#000" font-weight="normal" text-anchor="start" >##.##</text>
<text x="1012.6" y="390.8" font-size="12" fill="#000" font-weight="normal" text-anchor="start" >##.##</text>
<rect x="364.3" y="257.1" width="229.7" height="44.6" rx="8.5" fill="#c0c0c0" stroke="#333" stroke-width="2"/>
<text x="384.8" y="271.8" font-size="12" fill="#000" font-weight="normal" text-anchor="start" >HP</text>
<text x="427" y="271.8" font-size="12" fill="#000" font-weight="normal" text-anchor="start" >CP</text>
<text x="486.6" y="271.8" font-size="12" fill="#000" font-weight="normal" text-anchor="start" >Performance</text>
<circle cx="393.8" cy="284.5" r="10.6" fill="#fff" stroke="#777" stroke-width="0.8"/>
<circle cx="434.3" cy="284.5" r="10.6" fill="#fff" stroke="#777" stroke-width="0.8"/>
<rect x="483.5" y="276.5" width="75" height="18" fill="#c8c8c8" stroke="#a0a0a0" stroke-width="1"/>
<rect x="483.5" y="276.5" width="37" height="18" fill="#2ee09a"/>
<text x="507" y="290.4" font-size="12" fill="#000" font-weight="normal" text-anchor="start" >##.##</text>
<g transform="translate(508.6 389)">
<path d="M-10 0H0" stroke="#777" stroke-width="1"/>
<rect x="-18.9" y="-5.4" width="8.8" height="10.1" fill="#808080" stroke="#555" stroke-width="0.8"/>
<path d="M-7.5 -12.0H7.5L0 0ZM-7.5 12.0H7.5L0 0Z" fill="#808080" stroke="#404040" stroke-width="0.9" stroke-linejoin="round"/>
</g>
<g transform="translate(562.5 389)">
<path d="M-10 0H0" stroke="#777" stroke-width="1"/>
<rect x="-18.9" y="-5.4" width="8.8" height="10.1" fill="#808080" stroke="#555" stroke-width="0.8"/>
<path d="M-7.5 -12.0H7.5L0 0ZM-7.5 12.0H7.5L0 0Z" fill="#808080" stroke="#404040" stroke-width="0.9" stroke-linejoin="round"/>
</g>
<text x="468.1" y="380" font-size="10.5" fill="#000" font-weight="normal" text-anchor="start" >TW1</text>
<text x="574.8" y="380" font-size="10.5" fill="#000" font-weight="normal" text-anchor="start" >TK3</text>
<circle cx="704.9" cy="336.7" r="15.7" fill="#d0d0d0"/>
<path d="M704.9 322.6V350.79999999999995L720.0 336.7Z" fill="#000"/>
<text x="685.2" y="317.1" font-size="10.5" fill="#000" font-weight="normal" text-anchor="start" >Pump&#160; W</text>
<text x="834.2" y="332.1" font-size="12" fill="#000" font-weight="normal" text-anchor="start" >##.##</text>
<path d="M463 416.9H584A18.5 44.9 0 0 1 584 506.7H463A18 44.9 0 0 1 463 416.9Z" fill="#d4d4d4"/>
<rect x="484.3" y="421.9" width="39.2" height="79.6" fill="#a2a2a2" stroke="#acacac" stroke-width="0.8"/>
<rect x="484.3" y="462.1" width="39.2" height="39.4" fill="#5899ec" stroke="#acacac" stroke-width="0.8"/>
<text x="461" y="428.1" font-size="10.5" fill="#000" font-weight="normal" text-anchor="start" >100-</text>
<text x="472" y="502.4" font-size="10.5" fill="#000" font-weight="normal" text-anchor="start" >0-</text>
<text x="490" y="480.5" font-size="12" fill="#000" font-weight="normal" text-anchor="start" >##.##</text>
<text x="540.3" y="438.8" font-size="13.5" fill="#000" font-weight="normal" text-anchor="start" >Tank 1</text>
<rect x="536.6" y="444.3" width="47.2" height="12.4" fill="#c0c0c0"/>
<text x="549.7" y="455.1" font-size="12" fill="#000" font-weight="normal" text-anchor="start" >##.##</text>
<g transform="translate(533.6 526.8)">
<path d="M-7.6 -12.2H7.6L0 0ZM-7.6 12.2H7.6L0 0Z" fill="#808080" stroke="#404040" stroke-width="0.9" stroke-linejoin="round"/>
</g>
<text x="504.5" y="523" font-size="10.5" fill="#000" font-weight="normal" text-anchor="start" >TA2</text>
<path d="M568 555.4H595" stroke="#000" stroke-width="3.5"/>
<path d="M569.5 547.8V563.0L581.2 555.4ZM593.7 547.8V563.0L582 555.4Z" fill="#808080" stroke="#404040" stroke-width="0.9" stroke-linejoin="round"/>
<path d="M625 550.1V560.6999999999999L635.5 555.4Z" fill="#000"/>
<circle cx="651" cy="556.2" r="15.3" fill="#d0d0d0"/>
<path d="M651 542.5000000000001V569.9L665.6999999999999 556.2Z" fill="#000"/>
<text x="565.2" y="544.8" font-size="10.5" fill="#000" font-weight="normal" text-anchor="start" >Valve 1</text>
<text x="634.5" y="535.9" font-size="10.5" fill="#000" font-weight="normal" text-anchor="start" >Pump 1</text>
<path d="M568 623.1H595" stroke="#000" stroke-width="3.5"/>
<path d="M569.5 615.5V630.7L581.2 623.1ZM593.7 615.5V630.7L582 623.1Z" fill="#808080" stroke="#404040" stroke-width="0.9" stroke-linejoin="round"/>
<path d="M625 617.8000000000001V628.4L635.5 623.1Z" fill="#000"/>
<circle cx="651" cy="623.7" r="15.3" fill="#d0d0d0"/>
<path d="M651 610.0000000000001V637.4L665.6999999999999 623.7Z" fill="#000"/>
<text x="565.2" y="612.6" font-size="10.5" fill="#000" font-weight="normal" text-anchor="start" >Valve 2</text>
<text x="634.5" y="603.9" font-size="10.5" fill="#000" font-weight="normal" text-anchor="start" >Pump 2</text>
<path d="M568 692.2H595" stroke="#000" stroke-width="3.5"/>
<path d="M569.5 684.6V699.8000000000001L581.2 692.2ZM593.7 684.6V699.8000000000001L582 692.2Z" fill="#808080" stroke="#404040" stroke-width="0.9" stroke-linejoin="round"/>
<path d="M625 686.9000000000001V697.5L635.5 692.2Z" fill="#000"/>
<circle cx="651" cy="692.3" r="15.3" fill="#d0d0d0"/>
<path d="M651 678.6V705.9999999999999L665.6999999999999 692.3Z" fill="#000"/>
<text x="565.2" y="681.8" font-size="10.5" fill="#000" font-weight="normal" text-anchor="start" >Valve 3</text>
<text x="634.5" y="673.1" font-size="10.5" fill="#000" font-weight="normal" text-anchor="start" >Pump 3</text>
<path d="M793.2 614.9V630.9L805.3 622.9ZM817.3 614.9V630.9L805.3 622.9Z" fill="#808080" stroke="#404040" stroke-width="0.9" stroke-linejoin="round"/>
<text x="795.1" y="612.9" font-size="10.5" fill="#000" font-weight="normal" text-anchor="start" >TA4</text>
<g transform="translate(874.5 554.5)">
<path d="M-7.75 -12.1H7.75L0 0ZM-7.75 12.1H7.75L0 0Z" fill="#808080" stroke="#404040" stroke-width="0.9" stroke-linejoin="round"/>
</g>
<text x="844.4" y="552.7" font-size="10.5" fill="#000" font-weight="normal" text-anchor="start" >TA5</text>
<text x="795.1" y="415.3" font-size="10.5" fill="#000" font-weight="normal" text-anchor="start" >Condenser</text>
<g transform="translate(818.2 442.3)">
<circle r="15" fill="#c0c0c0" stroke="#3a3a3a" stroke-width="0.9"/>
<path d="M-7.5 -13L13.2 -6.6M-7.5 13L13.2 6.6" stroke="#3a3a3a" stroke-width="0.9" fill="none"/>
<g fill="none" stroke="#444" stroke-width="0.8"><path d="M0 0C3 -1.2 8 -1 9.5 -0.2C8 0.8 3 0.9 0 0Z"/><path d="M0 0C-1 -3 -4.5 -6.5 -6 -7C-5.5 -5 -3 -2 0 0Z"/><path d="M0 0C-1.5 2.5 -4.5 6.5 -6 7.2C-5.8 5.5 -3 1.8 0 0Z"/></g>
</g>
<g transform="translate(873.4 442.3)">
<circle r="15" fill="#c0c0c0" stroke="#3a3a3a" stroke-width="0.9"/>
<path d="M-7.5 -13L13.2 -6.6M-7.5 13L13.2 6.6" stroke="#3a3a3a" stroke-width="0.9" fill="none"/>
<g fill="none" stroke="#444" stroke-width="0.8"><path d="M0 0C3 -1.2 8 -1 9.5 -0.2C8 0.8 3 0.9 0 0Z"/><path d="M0 0C-1 -3 -4.5 -6.5 -6 -7C-5.5 -5 -3 -2 0 0Z"/><path d="M0 0C-1.5 2.5 -4.5 6.5 -6 7.2C-5.8 5.5 -3 1.8 0 0Z"/></g>
</g>
<g transform="translate(928.6 442.3)">
<circle r="15" fill="#c0c0c0" stroke="#3a3a3a" stroke-width="0.9"/>
<path d="M-7.5 -13L13.2 -6.6M-7.5 13L13.2 6.6" stroke="#3a3a3a" stroke-width="0.9" fill="none"/>
<g fill="none" stroke="#444" stroke-width="0.8"><path d="M0 0C3 -1.2 8 -1 9.5 -0.2C8 0.8 3 0.9 0 0Z"/><path d="M0 0C-1 -3 -4.5 -6.5 -6 -7C-5.5 -5 -3 -2 0 0Z"/><path d="M0 0C-1.5 2.5 -4.5 6.5 -6 7.2C-5.8 5.5 -3 1.8 0 0Z"/></g>
</g>
<text x="803.8" y="470.1" font-size="12" fill="#000" font-weight="normal" text-anchor="start" >##.##</text>
<text x="858.2" y="470.1" font-size="12" fill="#000" font-weight="normal" text-anchor="start" >##.##</text>
<text x="913.7" y="470.1" font-size="12" fill="#000" font-weight="normal" text-anchor="start" >##.##</text>
<rect x="829.6" y="482.9" width="86.5" height="29.3" fill="#dadada" stroke="#333" stroke-width="1"/>
<path d="M836.5 483V512M909.4 483V512" stroke="#333" stroke-width="1"/>
<path d="M836.5 486.2H909.4M836.5 489.5H909.4M836.5 492.8H909.4M836.5 496.1H909.4M836.5 499.4H909.4M836.5 502.7H909.4M836.5 506.0H909.4M836.5 509.3H909.4" stroke="#333" stroke-width="0.9"/>
<text x="766.5" y="509.3" font-size="12" fill="#000" font-weight="normal" text-anchor="start" >##.##</text>
<text x="951.6" y="509.0" font-size="12" fill="#000" font-weight="normal" text-anchor="start" >##.##</text>
</svg>
<div class="a" style="left:1125px;top:89px;width:200px;height:318px;background:#2e2e2e"></div>
<div class="a" style="left:1125px;top:89px;width:200px;height:26px;background:#202221"></div>
<svg class="a" style="left:1130px;top:97px" width="14" height="10" viewBox="0 0 14 10"><path d="M1.8 7.8L7 2.6 12.2 7.8" fill="none" stroke="#fff" stroke-width="2.4"/></svg>
<div class="t ui" style="left:1152px;top:95.5px;font-size:11px;color:#fff">Transform</div>
<div class="a" style="left:1125px;top:115px;width:200px;height:26px;background:#202221"></div>
<svg class="a" style="left:1130px;top:123px" width="14" height="10" viewBox="0 0 14 10"><path d="M1.8 7.8L7 2.6 12.2 7.8" fill="none" stroke="#fff" stroke-width="2.4"/></svg>
<div class="t ui" style="left:1152px;top:121.5px;font-size:11px;color:#fff">Align</div>
<div class="a" style="left:1125px;top:209px;width:200px;height:26px;background:#202221"></div>
<svg class="a" style="left:1130px;top:217px" width="14" height="10" viewBox="0 0 14 10"><path d="M1.8 7.8L7 2.6 12.2 7.8" fill="none" stroke="#fff" stroke-width="2.4"/></svg>
<div class="t ui" style="left:1152px;top:215.5px;font-size:11px;color:#fff">Stroke</div>
<div class="a" style="left:1125px;top:355px;width:200px;height:26px;background:#202221"></div>
<svg class="a" style="left:1130px;top:363px" width="14" height="10" viewBox="0 0 14 10"><path d="M1.8 7.8L7 2.6 12.2 7.8" fill="none" stroke="#fff" stroke-width="2.4"/></svg>
<div class="t ui" style="left:1152px;top:361.5px;font-size:11px;color:#fff">Marker</div>
<div class="a" style="left:1125px;top:381px;width:200px;height:26px;background:#202221"></div>
<svg class="a" style="left:1130px;top:389px" width="14" height="10" viewBox="0 0 14 10"><path d="M1.8 7.8L7 2.6 12.2 7.8" fill="none" stroke="#fff" stroke-width="2.4"/></svg>
<div class="t ui" style="left:1152px;top:387.5px;font-size:11px;color:#fff">Interactivity</div>
<svg class="a" style="left:1125px;top:140px" width="200" height="70"><g fill="#fff" transform="translate(-1125 -140)">
<rect x="1134.2" y="150" width="1.5" height="15.9"/><rect x="1137.1" y="152.6" width="11.9" height="5.2"/><rect x="1137.1" y="159.2" width="7.4" height="5.7"/>
<rect x="1179" y="150" width="1" height="16"/><rect x="1173.6" y="152.6" width="11.4" height="5.2"/><rect x="1176.1" y="159.2" width="6.6" height="5.7"/>
<rect x="1222.7" y="150" width="1.4" height="15.9"/><rect x="1209.4" y="152.6" width="11.5" height="5.2"/><rect x="1213.8" y="159.2" width="7.1" height="5.7"/>
<rect x="1246.1" y="150.4" width="15.9" height="1.5"/><rect x="1247.1" y="153.5" width="5.5" height="7.2"/><rect x="1254.1" y="153.5" width="5.9" height="11.4"/>
<rect x="1284.1" y="158" width="16.3" height="1"/><rect x="1285.6" y="154" width="5.9" height="8.2"/><rect x="1293" y="152.6" width="5.5" height="11.1"/>
<rect x="1134.2" y="197.7" width="15.7" height="1.4"/><rect x="1135" y="188.9" width="6" height="7.1"/><rect x="1142" y="184.1" width="6" height="11.9"/>
</g></svg>
<div class="t" style="left:1135px;top:239.5px;font-size:10px;color:#cfd3d8">stroke width</div>
<div class="t" style="left:1208px;top:239.5px;font-size:10px;color:#cfd3d8">stroke style</div>
<div class="t" style="left:1136.5px;top:257px;font-size:14px;color:#c8d4e4">1</div>
<div class="a" style="left:1135px;top:273.5px;width:47px;height:1.3px;background:#bbb"></div>
<div class="a" style="left:1208px;top:255.2px;width:38.5px;height:17.5px;border:1.2px solid #9a9a9a"></div>
<div class="a" style="left:1213px;top:264.8px;width:13px;height:1.2px;background:#ddd"></div>
<svg class="a" style="left:1234px;top:260px" width="8" height="8"><path d="M0.8 1.2H7.2L4 7Z" fill="#ccc"/></svg>
<svg class="a" style="left:1125px;top:290px" width="200" height="60"><g transform="translate(-1125 -290)">
<clipPath id="cj"><rect x="1125" y="290" width="200" height="18.7"/></clipPath>
<g clip-path="url(#cj)" fill="none">
<path d="M1135.4 314V302.9H1152.8000000000002" stroke="#b0b0b0" stroke-width="8" stroke-linejoin="miter"/>
<path d="M1135.4 314V302.9H1152.8000000000002" stroke="#fff" stroke-width="1.3"/>
<path d="M1172.1 314V302.9H1189.5" stroke="#b0b0b0" stroke-width="8" stroke-linejoin="round"/>
<path d="M1172.1 314V302.9H1189.5" stroke="#fff" stroke-width="1.3"/>
<path d="M1210 314V302.9H1227.4" stroke="#b0b0b0" stroke-width="8" stroke-linejoin="bevel"/>
<path d="M1210 314V302.9H1227.4" stroke="#fff" stroke-width="1.3"/>
</g>
<path d="M1132.2 337.4H1152" stroke="#b0b0b0" stroke-width="8.6"/><path d="M1132.2 337.4H1152" stroke="#fff" stroke-width="1.3"/>
<path d="M1173.4 337.4H1184.6" stroke="#b0b0b0" stroke-width="8.6" stroke-linecap="square"/><path d="M1172 337.4H1185.7" stroke="#fff" stroke-width="1.3"/>
<path d="M1210.5 337.4H1223.8" stroke="#b0b0b0" stroke-width="8.6" stroke-linecap="round"/><path d="M1210.5 337.4H1223.1" stroke="#fff" stroke-width="1.3"/>
</g></svg>
<div class="a" style="left:198px;top:843px;width:1153px;height:30px;background:#2e2e2e"></div>
<div class="t" style="left:203.5px;top:854.5px;font-size:12px;letter-spacing:0.7px;color:#fff;-webkit-text-stroke:0.3px #fff">75.0 %</div>
<div class="a" style="left:252px;top:849px;width:15px;height:21px;background:#1f1f1f"></div>
<div class="t" style="left:254.6px;top:852.5px;font-size:13.5px;color:#fff;transform:scaleX(0.86);transform-origin:0 0">O</div>
<div class="a" style="left:328px;top:846px;width:16px;height:18px;background:#fff"></div>
<div class="a" style="left:348px;top:846px;width:13px;height:15px;background:#000;border:1.5px solid #b8b8b8;border-radius:1.5px"></div>
<div class="a" style="left:396px;top:848px;width:15px;height:15px;background:#fff"></div>
<svg class="a" style="left:396px;top:848px" width="15" height="15"><path d="M1.5 0L13.5 15M13.5 0L1.5 15" stroke="#ff0000" stroke-width="1.4"/></svg>
<div class="a" style="left:411px;top:848px;width:15px;height:15px;background:#000000"></div>
<div class="a" style="left:426px;top:848px;width:15px;height:15px;background:#3f3f3f"></div>
<div class="a" style="left:441px;top:848px;width:15px;height:15px;background:#7f7f7f"></div>
<div class="a" style="left:456px;top:848px;width:15px;height:15px;background:#bfbfbf"></div>
<div class="a" style="left:471px;top:848px;width:15px;height:15px;background:#ffffff"></div>
<div class="a" style="left:486px;top:848px;width:15px;height:15px;background:#ff0000"></div>
<div class="a" style="left:501px;top:848px;width:15px;height:15px;background:#e07f10"></div>
<div class="a" style="left:516px;top:848px;width:15px;height:15px;background:#e8e820"></div>
<div class="a" style="left:531px;top:848px;width:15px;height:15px;background:#c8f010"></div>
<div class="a" style="left:546px;top:848px;width:15px;height:15px;background:#10f010"></div>
<div class="a" style="left:561px;top:848px;width:15px;height:15px;background:#10f07f"></div>
<div class="a" style="left:576px;top:848px;width:15px;height:15px;background:#10e8ff"></div>
<div class="a" style="left:591px;top:848px;width:15px;height:15px;background:#107fff"></div>
<div class="a" style="left:606px;top:848px;width:15px;height:15px;background:#1020ff"></div>
<div class="a" style="left:621px;top:848px;width:15px;height:15px;background:#a010ff"></div>
<div class="a" style="left:636px;top:848px;width:15px;height:15px;background:#e010ff"></div>
<div class="a" style="left:651px;top:848px;width:15px;height:15px;background:#ff1060"></div>
<div class="a" style="left:666px;top:848px;width:15px;height:15px;background:#7f0000"></div>
<div class="a" style="left:681px;top:848px;width:15px;height:15px;background:#904018"></div>
<div class="a" style="left:696px;top:848px;width:15px;height:15px;background:#8a6c08"></div>
<div class="a" style="left:711px;top:848px;width:15px;height:15px;background:#3f6a20"></div>
<div class="a" style="left:726px;top:848px;width:15px;height:15px;background:#004a00"></div>
<div class="a" style="left:741px;top:848px;width:15px;height:15px;background:#006f7a"></div>
<div class="a" style="left:756px;top:848px;width:15px;height:15px;background:#006f7a"></div>
<div class="a" style="left:771px;top:848px;width:15px;height:15px;background:#005080"></div>
<div class="a" style="left:786px;top:848px;width:15px;height:15px;background:#00007f"></div>
<div class="a" style="left:801px;top:848px;width:15px;height:15px;background:#4a007f"></div>
<div class="a" style="left:816px;top:848px;width:15px;height:15px;background:#7f007f"></div>
<div class="a" style="left:831px;top:848px;width:15px;height:15px;background:#7f1030"></div>
<div class="a" style="left:846px;top:848px;width:15px;height:15px;background:#ffaaaa"></div>
<div class="a" style="left:861px;top:848px;width:15px;height:15px;background:#fadfa8"></div>
<div class="a" style="left:876px;top:848px;width:15px;height:15px;background:#fbf2a8"></div>
<div class="a" style="left:891px;top:848px;width:15px;height:15px;background:#c8f8b0"></div>
<div class="a" style="left:906px;top:848px;width:15px;height:15px;background:#aaf8aa"></div>
<div class="a" style="left:921px;top:848px;width:15px;height:15px;background:#aaf4d0"></div>
<div class="a" style="left:936px;top:848px;width:15px;height:15px;background:#aaeefa"></div>
<div class="a" style="left:951px;top:848px;width:15px;height:15px;background:#aad8fa"></div>
<div class="a" style="left:966px;top:848px;width:15px;height:15px;background:#b0aaf8"></div>
<div class="a" style="left:981px;top:848px;width:15px;height:15px;background:#b0aaf8"></div>
<div class="a" style="left:996px;top:848px;width:15px;height:15px;background:#f8c0f8"></div>
<div class="a" style="left:1011px;top:848px;width:15px;height:15px;background:#ffaaaa"></div>
<div class="a" style="left:0;top:873px;width:1351px;height:47px;background:#fff"></div>
<svg class="a" style="left:19px;top:888px" width="14" height="18" viewBox="0 0 14 18"><path d="M1 1h8l4 4v12H1z" fill="#fafafa" stroke="#777" stroke-width="1"/><path d="M9 1v4h4" fill="none" stroke="#777" stroke-width="1"/></svg><div class="t" style="left:47px;top:895px;font-size:12.7px;color:#333">MyProject (22).fuxap</div><svg class="a" style="left:199px;top:893px" width="12" height="9"><path d="M1 7.5L6 2.5 11 7.5" fill="none" stroke="#666" stroke-width="1.6"/></svg><div class="a" style="left:228px;top:880px;width:1px;height:36px;background:#ccc"></div>
<svg class="a" style="left:246.5px;top:888px" width="14" height="18" viewBox="0 0 14 18"><path d="M1 1h8l4 4v12H1z" fill="#fafafa" stroke="#777" stroke-width="1"/><path d="M9 1v4h4" fill="none" stroke="#777" stroke-width="1"/></svg><div class="t" style="left:274.5px;top:895px;font-size:12.7px;color:#333">MyProject (21).fuxap</div><svg class="a" style="left:426px;top:893px" width="12" height="9"><path d="M1 7.5L6 2.5 11 7.5" fill="none" stroke="#666" stroke-width="1.6"/></svg><div class="a" style="left:455px;top:880px;width:1px;height:36px;background:#ccc"></div>
<div class="a" style="left:1209px;top:881px;width:103px;height:30px;border:1px solid #adadad;border-radius:4px;background:#fff"></div>
<div class="t" style="left:1224.5px;top:890px;font-size:12.5px;color:#333">Alle anzeigen</div>
<svg class="a" style="left:1325px;top:890px" width="14" height="14"><path d="M2 2L12 12M12 2L2 12" stroke="#555" stroke-width="1.8"/></svg>
<div class="a" style="left:1350px;top:0;width:1px;height:920px;background:#3a3a3a"></div>
</body></html>
